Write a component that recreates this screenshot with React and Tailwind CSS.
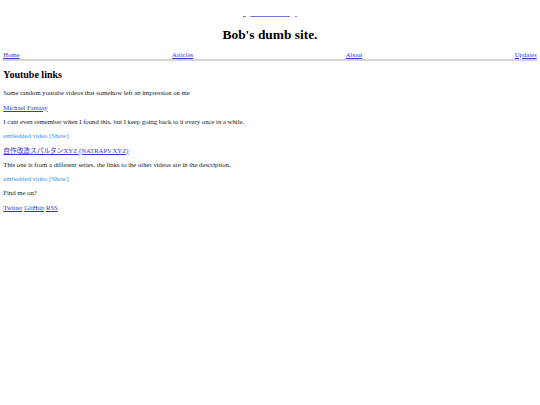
export default function App() {
  const link = 'text-[#3535dc] underline';
  return (
    <div className="min-h-[405px] bg-white px-[3.3px] pt-[3.3px] font-['Liberation_Serif',serif] text-[6.7px] leading-[7.7px] text-[#1a1a1a]">
      <div className="mt-[6.7px] flex h-[7.7px] items-end justify-center">
        <span className="mb-[1px] inline-block w-[3px] border-b border-[#7878d8]" />
        <span className="ml-[4px] mb-[1px] inline-block w-[40px] border-b border-[#7878d8]" />
        <span className="ml-[5px] mb-[1px] inline-block w-[2px] border-b border-[#7878d8]" />
      </div>

      <h1 className="mt-[9px] text-center text-[13.4px] font-bold leading-[15px] text-black">Bob's dumb site.</h1>

      <nav className="mt-[9px] flex justify-between border-b-2 border-[#d4d4d4] pb-[1px]">
        <a className={link}>Home</a>
        <a className={link}>Articles</a>
        <a className={link}>About</a>
        <a className={link}>Updates</a>
      </nav>

      <h2 className="mt-[8px] text-[10px] font-bold leading-[12px] text-black">Youtube links</h2>

      <p className="mt-[8px]">Some random youtube videos that somehow left an impression on me</p>
      <p className="mt-[6.6px]">
        <a className={link}>Michael Fantasy</a>
      </p>
      <p className="mt-[6.6px]">I cant even remember when I found this, but I keep going back to it every once in a while.</p>
      <p className="mt-[6.6px] text-[#3a8ee6]">embedded video [Show]</p>
      <p className="mt-[6.6px]">
        <a className={link + " font-['Liberation_Serif','Noto_Sans_CJK_JP',serif]"}>自作改造スパルタンXYZ (NATRAPS XYZ)</a>
      </p>
      <p className="mt-[6.6px]">This one is from a different series, the links to the other videos are in the description.</p>
      <p className="mt-[6.6px] text-[#3a8ee6]">embedded video [Show]</p>
      <p className="mt-[6.6px]">Find me on?</p>
      <p className="mt-[6.6px]">
        <a className={link}>Twitter</a> <a className={link}>GitHub</a> <a className={link}>RSS</a>
      </p>
    </div>
  );
}
